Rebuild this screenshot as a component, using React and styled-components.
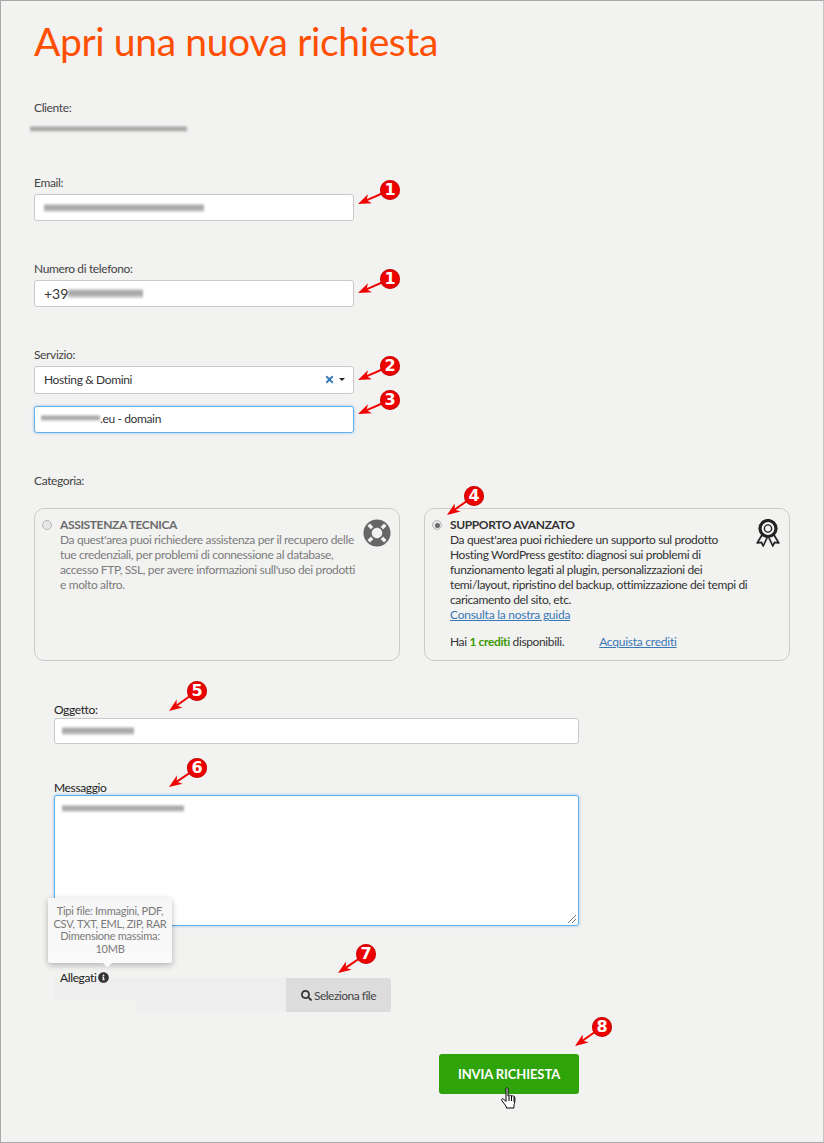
import React from "react";
import styled, { createGlobalStyle, css } from "styled-components";
import { FaInfoCircle, FaLifeRing, FaSearch, FaTimes } from "react-icons/fa";

const Global = createGlobalStyle`
  html, body { margin: 0; padding: 0; background: #f2f2f1; }
  * { box-sizing: border-box; }
`;

const Page = styled.div`
  position: relative;
  width: 824px;
  height: 1143px;
  padding: 0 33px;
  overflow: hidden;
  background: #f2f2f1;
  border: 1px solid #a9a9a9;
  border-right-color: #c4c4c4;
  font: 12px/15px "Lato", "Liberation Sans", sans-serif;
  letter-spacing: -0.37px;
  color: #444;
`;

const Title = styled.h1`
  margin: 15px 0 0;
  height: 51px;
  font: 400 39px/51px "Lato", "Liberation Sans", sans-serif;
  letter-spacing: -0.37px;
  color: #ff4f00;
`;

const Group = styled.div`
  margin-top: ${(p) => p.$top}px;
`;

const Label = styled.label`
  display: block;
  height: 14px;
  line-height: 14px;
  margin-bottom: ${(p) => p.$gap ?? 4}px;
  color: ${(p) => p.$dark ? "#222" : "#444"};
`;

const Smudge = styled.span`
  display: inline-block;
  width: ${(p) => p.$w}px;
  height: ${(p) => p.$h ?? 6}px;
  flex: none;
  margin-left: ${(p) => p.$shift ?? 0}px;
  background: linear-gradient(180deg, #c9c9c9 0%, #8e8e8e 45%, #a5a5a5 65%, #d5d5d5 100%);
  filter: blur(1px);
  opacity: 0.85;
`;

const Box = styled.div`
  display: flex;
  align-items: center;
  width: ${(p) => p.$w ?? 320}px;
  height: ${(p) => p.$h ?? 27}px;
  padding-left: ${(p) => p.$pad ?? 9}px;
  padding-bottom: ${(p) => p.$lift ?? 0}px;
  background: #fff;
  border: 1px solid #c9c9c9;
  border-radius: 3px;
  color: #333;
  ${(p) => p.$focus && css`
    border-color: #66afe9;
    box-shadow: 0 0 3px rgba(102, 175, 233, 0.7);
  `}
`;

const Phone = styled.span`
  font-size: 14px;
  letter-spacing: 0;
`;

const SelectBox = styled(Box)`
  justify-content: space-between;
  padding-right: 8px;
  margin-bottom: 12px;
`;

const SelectTools = styled.span`
  display: flex;
  align-items: center;
  gap: 4px;
  color: #337ab7;
  font-size: 11px;
`;

const Caret = styled.i`
  width: 0;
  height: 0;
  border-left: 3px solid transparent;
  border-right: 3px solid transparent;
  border-top: 3px solid #222;
`;

const Cards = styled.div`
  display: grid;
  grid-template-columns: 366px 366px;
  gap: 24px;
  margin-top: 20px;
`;

const Card = styled.div`
  display: flex;
  height: 153px;
  padding: 8px 7px 0 7px;
  border: 1px solid #cbcbcb;
  border-radius: 10px;
  color: ${(p) => p.$muted ? "#7c7c7c" : "#333"};
`;

const Radio = styled.span`
  position: relative;
  flex: none;
  width: 10px;
  height: 10px;
  margin: 3px 8px 0 0;
  border: 1px solid #b9b9b9;
  border-radius: 50%;
  background: #e6e6e6;
  ${(p) => p.$on && css`
    &::after {
      content: "";
      position: absolute;
      inset: 1.5px;
      border-radius: 50%;
      background: #6b6b6b;
    }
  `}
`;

const CardBody = styled.div`
  width: 300px;
  flex: none;
`;

const CardTitle = styled.div`
  font-weight: 700;
  color: ${(p) => p.$muted ? "#6a6a6a" : "#333"};
`;

const CardIcon = styled.div`
  display: flex;
  flex: none;
  margin: 2px 0 0 ${(p) => p.$ml ?? 3}px;
  color: ${(p) => p.$muted ? "#666" : "#222"};
`;

const Link = styled.a`
  color: #3a78b5;
  letter-spacing: -0.25px;
  text-decoration: underline;
`;

const Credits = styled.div`
  display: flex;
  gap: 35px;
  margin-top: 12px;
`;

const Green = styled.b`
  font-weight: 700;
  color: #3d9a05;
`;

const Lower = styled.div`
  padding-left: 20px;
`;

const TextArea = styled(Box)`
  position: relative;
  align-items: flex-start;
  padding-top: 9px;
  border-color: #66afe9;
  box-shadow: 0 0 3px rgba(102, 175, 233, 0.7);
`;

const Grip = styled.svg`
  position: absolute;
  right: 1px;
  bottom: 1px;
`;

const FileBlock = styled.div`
  position: relative;
  margin-top: 44px;
  width: 337px;
`;

const FileLabel = styled.div`
  position: relative;
  z-index: 1;
  display: flex;
  align-items: center;
  gap: 2px;
  height: 14px;
  margin: 0 0 -6px 6px;
  color: #222;
`;

const FileRow = styled.div`
  display: flex;
  height: 34px;
`;

const FileField = styled.div`
  flex: 1;
  background: linear-gradient(180deg, #eeeeee 0 22px, transparent 22px), linear-gradient(90deg, #f2f2f1 0 82px, #eeeeee 82px);
`;

const FileButton = styled.div`
  display: flex;
  align-items: center;
  justify-content: center;
  gap: 2px;
  width: 105px;
  background: #dcdcdc;
  border-radius: 0 3px 3px 0;
  letter-spacing: -0.5px;
  color: #444;
`;

const Tooltip = styled.div`
  position: absolute;
  left: -6px;
  bottom: calc(100% + 7px);
  width: 124px;
  padding: 7px 4px 8px;
  background: linear-gradient(180deg, #f6f6f6, #fafafa);
  border-radius: 3px;
  box-shadow: 0 2px 6px rgba(0, 0, 0, 0.28);
  font-size: 11px;
  letter-spacing: -0.25px;
  line-height: 12.5px;
  text-align: center;
  color: #7a7a7a;
  &::after {
    content: "";
    position: absolute;
    left: 56px;
    bottom: -3px;
    width: 7px;
    height: 7px;
    background: #fafafa;
    transform: rotate(45deg);
  }
`;

const Submit = styled.button`
  display: block;
  width: 140px;
  height: 40px;
  margin: 42px 0 0 385px;
  background: #2fa30a;
  border: 0;
  border-radius: 3px;
  color: #fff;
  font: 700 13px "Lato", "Liberation Sans", sans-serif;
  letter-spacing: -0.1px;
`;

const Hand = styled.svg`
  position: absolute;
  left: 500px;
  top: 1086px;
`;

const MarkWrap = styled.div`
  position: absolute;
  left: ${(p) => p.$x}px;
  top: ${(p) => p.$y}px;
  width: ${(p) => p.$w}px;
  height: ${(p) => p.$h}px;
`;

const MarkArrow = styled.svg`
  position: absolute;
  left: 0;
  top: 0;
  overflow: visible;
`;

const MarkBadge = styled.span`
  position: absolute;
  left: ${(p) => p.$cx - 10}px;
  top: ${(p) => p.$cy - 10}px;
  width: 20px;
  height: 20px;
  border-radius: 50%;
  background: #ee0000;
  box-shadow: inset 0 0 2px #8a0000;
  color: #fff;
  font: 700 16px/20px "DejaVu Sans", "Liberation Sans", sans-serif;
  letter-spacing: 0;
  text-align: center;
`;

const Mark = ({ n, tip, badge }) => {
  const dx = badge[0] - tip[0];
  const dy = badge[1] - tip[1];
  const len = Math.hypot(dx, dy);
  const ux = dx / len;
  const uy = dy / len;
  const bx = ux * 13;
  const by = uy * 13;
  const px = -uy * 5;
  const py = ux * 5;
  const ox = 12;
  const oy = Math.abs(dy) + 12;
  const pts = [
    [ox, oy],
    [ox + bx + px, oy + by + py],
    [ox + bx * 0.72, oy + by * 0.72],
    [ox + bx - px, oy + by - py],
  ].map((q) => q.join(",")).join(" ");
  return (
    <MarkWrap $x={tip[0] - ox - 1} $y={tip[1] - oy - 1} $w={dx + 24} $h={oy + 4}>
      <MarkArrow width={dx + 24} height={oy + 4}>
        <line x1={ox + bx * 0.7} y1={oy + by * 0.7} x2={ox + dx} y2={oy - Math.abs(dy)} stroke="#f00000" strokeWidth="2" />
        <polygon points={pts} fill="#f00000" />
      </MarkArrow>
      <MarkBadge $cx={ox + dx} $cy={oy - Math.abs(dy)}>{n}</MarkBadge>
    </MarkWrap>
  );
};

const Award = () => (
  <svg width="24" height="28" viewBox="0 0 24 28" fill="none" stroke="#222" strokeWidth="2">
    <circle cx="12" cy="9.500" r="8" strokeWidth="3.200" />
    <circle cx="12" cy="9.500" r="3.600" strokeWidth="1.400" />
    <path d="M6 16 1.200 24l4.300-.7 1.700 3.700 4-8.500M18 16l4.800 8-4.300-.7-1.700 3.700-4-8.500" strokeWidth="1.700" strokeLinejoin="round" />
  </svg>
);

export default function App() {
  return (
    <Page>
      <Global />
      <Title>Apri una nuova richiesta</Title>

      <Group $top={34}>
        <Label $gap={5}>Cliente:</Label>
        <Smudge $w={157} $shift={-4} />
      </Group>

      <Group $top={41}>
        <Label>Email:</Label>
        <Box $pad={9}><Smudge $w={160} $h={8} /></Box>
      </Group>

      <Group $top={41}>
        <Label>Numero di telefono:</Label>
        <Box><Phone>+39</Phone><Smudge $w={75} $h={9} /></Box>
      </Group>

      <Group $top={41}>
        <Label>Servizio:</Label>
        <SelectBox $h={28} $lift={1}>
          <span>Hosting &amp; Domini</span>
          <SelectTools><FaTimes /><Caret /></SelectTools>
        </SelectBox>
        <Box $focus $pad={6} $lift={3}><Smudge $w={59} $h={6} />.eu - domain</Box>
      </Group>

      <Group $top={41}>
        <Label $gap={0}>Categoria:</Label>
        <Cards>
          <Card $muted>
            <Radio />
            <CardBody>
              <CardTitle $muted>ASSISTENZA TECNICA</CardTitle>
              Da quest'area puoi richiedere assistenza per il recupero delle tue credenziali, per problemi di connessione al database, accesso FTP, SSL, per avere informazioni sull'uso dei prodotti e molto altro.
            </CardBody>
            <CardIcon $muted><FaLifeRing size={28} /></CardIcon>
          </Card>
          <Card>
            <Radio $on />
            <CardBody>
              <CardTitle>SUPPORTO AVANZATO</CardTitle>
              Da quest'area puoi richiedere un supporto sul prodotto Hosting WordPress gestito: diagnosi sui problemi di funzionamento legati al plugin, personalizzazioni dei temi/layout, ripristino del backup, ottimizzazione dei tempi di caricamento del sito, etc.
              <br />
              <Link>Consulta la nostra guida</Link>
              <Credits>
                <span>Hai <Green>1 crediti</Green> disponibili.</span>
                <Link>Acquista crediti</Link>
              </Credits>
            </CardBody>
            <CardIcon $ml={6}><Award /></CardIcon>
          </Card>
        </Cards>
      </Group>

      <Lower>
        <Group $top={42}>
          <Label $dark $gap={1}>Oggetto:</Label>
          <Box $w={525} $h={26} $pad={7}><Smudge $w={72} $h={8} /></Box>
        </Group>
        <Group $top={37}>
          <Label $dark $gap={0}>Messaggio</Label>
          <TextArea $w={525} $h={131} $pad={7}>
            <Smudge $w={122} $h={7} />
            <Grip width="10" height="10" viewBox="0 0 10 10" stroke="#777" strokeWidth="1">
              <path d="M1 9 9 1M5 9 9 5" />
            </Grip>
          </TextArea>
        </Group>
        <FileBlock>
          <Tooltip>
            Tipi file: Immagini, PDF,<br />
            CSV, TXT, EML, ZIP, RAR<br />
            Dimensione massima:<br />
            10MB
          </Tooltip>
          <FileLabel>Allegati <FaInfoCircle size={11} color="#333" /></FileLabel>
          <FileRow>
            <FileField />
            <FileButton><FaSearch size={11} color="#333" /> Seleziona file</FileButton>
          </FileRow>
        </FileBlock>
        <Submit>INVIA RICHIESTA</Submit>
      </Lower>

      <Hand width="17" height="23" viewBox="0 0 17 23">
        <path d="M5 1.500c0-1 2-1 2 0V9l1-.5c.5-.5 1.500-.3 1.800.3.6-.5 1.600-.3 1.900.4.7-.4 1.800-.1 2 .8.4 2 .3 4.500-.3 6.500-.4 1-.5 2-.5 4.500H5.500c0-1.500-1-2.500-2.500-4.500L.8 13.500c-.7-1.200.7-2.300 1.700-1.500L5 14.500Z" fill="#fff" stroke="#000" strokeWidth="1" />
        <path d="M8 9v5M10.500 9v5M13 10v5" stroke="#000" strokeWidth="1" fill="none" />
      </Hand>

      <Mark n="1" tip={[358, 204]} badge={[390, 190]} />
      <Mark n="1" tip={[358, 293]} badge={[390, 279]} />
      <Mark n="2" tip={[358, 380]} badge={[390, 366]} />
      <Mark n="3" tip={[358, 414]} badge={[390, 400]} />
      <Mark n="4" tip={[447, 515]} badge={[474, 496]} />
      <Mark n="5" tip={[169, 711]} badge={[197, 691]} />
      <Mark n="6" tip={[169, 787]} badge={[197, 768]} />
      <Mark n="7" tip={[338, 973]} badge={[366, 954]} />
      <Mark n="8" tip={[575, 1046]} badge={[602, 1027]} />
    </Page>
  );
}
